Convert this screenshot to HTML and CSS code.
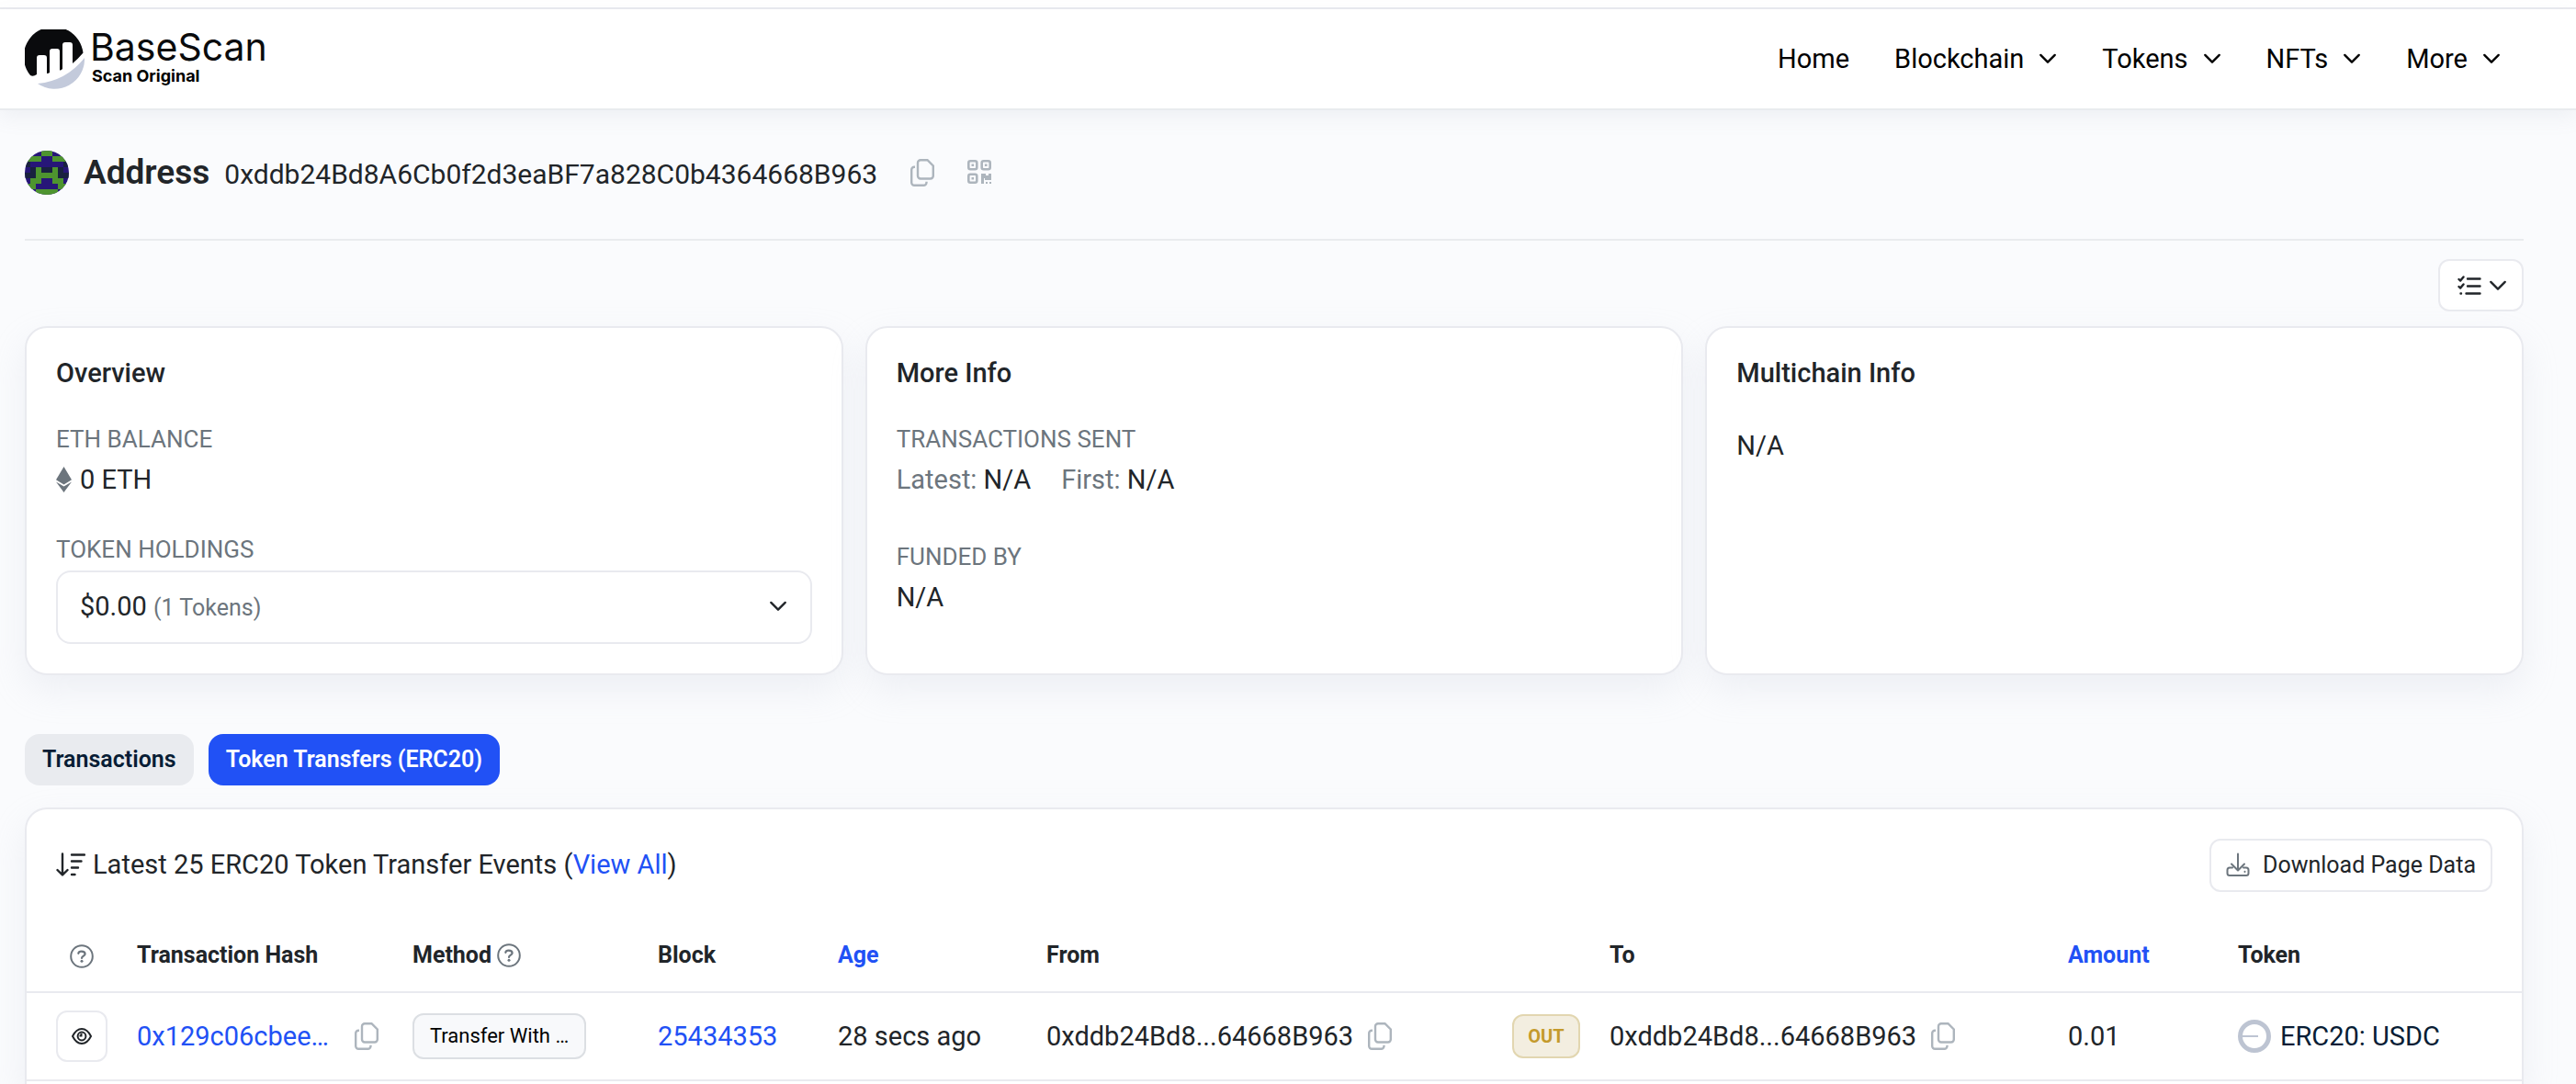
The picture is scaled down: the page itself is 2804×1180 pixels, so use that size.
FILE: index.html
```html
<!DOCTYPE html>
<html lang="en">

<head>
    <meta charset="UTF-8">
    <meta name="viewport" content="width=device-width, initial-scale=1.0">
    <title>Address | BaseScan</title>
    <link rel="stylesheet" href="styles.css">
</head>

<body>
    <!-- shared icons -->
    <svg class="sprite" aria-hidden="true">
        <symbol id="chevron" viewBox="0 0 22 14">
            <path d="M2.500 2.500L11 11L19.500 2.500" fill="none" stroke="currentColor" stroke-width="2.600" stroke-linecap="round" stroke-linejoin="round" />
        </symbol>
        <symbol id="copy" viewBox="0 0 26 30">
            <path d="M11 1.200H18.500L24.800 7.500V18.500A3 3 0 0 1 21.800 21.500H11A3 3 0 0 1 8 18.500V4.200A3 3 0 0 1 11 1.200ZM5 8.700H4.200A3 3 0 0 0 1.200 11.700V25.800A3 3 0 0 0 4.200 28.800H14.500A3 3 0 0 0 17.500 25.800V24.800" fill="none" stroke="currentColor" stroke-width="2.400" />
        </symbol>
        <symbol id="help" viewBox="0 0 26 26">
            <circle cx="13" cy="13" r="11.800" fill="none" stroke="currentColor" stroke-width="2" />
            <path d="M9.300 9.800C9.600 8.300 10.600 7.600 12.600 7.600C15 7.600 16.600 8.600 16.600 10.400C16.600 12.600 13 12.600 13 15" fill="none" stroke="currentColor" stroke-width="2.200" stroke-linecap="round" />
            <circle cx="13" cy="18.300" r="1.500" fill="currentColor" />
        </symbol>
    </svg>

    <div class="topbar"></div>
    <header class="header">
        <a class="logo" href="#">
            <svg width="65" height="65" viewBox="0 0 65 65" aria-hidden="true">
                <path fill="#0a0b0d" d="M6 50A32.500 32.500 0 1 1 63.500 25.500Q58 32 52 37V17Q52 14 49 14H44Q41 14 41 17V43Q39.500 44.500 38 44.500V24Q38 21 35 21H30Q27 21 27 24V47Q26 48 24 48V31Q24 28 21 28H16Q13 28 13 31V49Q9 52 6 50Z" />
                <path fill="#c3cadb" d="M65 31A32.500 32.500 0 0 1 14 59Q45 56 65 31Z" />
            </svg>
            <span class="logo-text">
                <span class="logo-name">BaseScan</span>
                <span class="logo-sub">Scan Original</span>
            </span>
        </a>
        <nav class="nav">
            <a href="#">Home</a>
            <a href="#">Blockchain <svg class="chevron"><use href="#chevron" /></svg></a>
            <a href="#">Tokens <svg class="chevron"><use href="#chevron" /></svg></a>
            <a href="#">NFTs <svg class="chevron"><use href="#chevron" /></svg></a>
            <a href="#">More <svg class="chevron"><use href="#chevron" /></svg></a>
        </nav>
    </header>

    <main class="container">
        <div class="address">
            <svg class="identicon" viewBox="0 0 8 8" shape-rendering="crispEdges" aria-hidden="true">
                <rect width="8" height="8" fill="#271678" />
                <path fill="#4e942f" d="M3 0h2v1h-2zM0 1h3v1h-3zM5 1h3v1h-3zM2 3h1v1h2v-1h1v2h1v1h1v1h-2v-1h-1v-1h-2v1h-1v1h-2v-1h1v-1h1zM0 6h2v1h-2zM6 6h2v1h-2zM2 7h4v1h-4z" />
                <path fill="#19213f" d="M0 2h1v1h-1zM7 2h1v1h-1zM1 3h1v2h-2v-1h1zM6 3h1v1h1v1h-2zM3 3h2v1h-2z" />
            </svg>
            <div class="address-title">
                <h1>Address</h1>
                <span class="hash">0xddb24Bd8A6Cb0f2d3eaBF7a828C0b4364668B963</span>
            </div>
            <button class="icon-btn" aria-label="Copy address"><svg class="copy"><use href="#copy" /></svg></button>
            <button class="icon-btn qr" aria-label="Show QR code">
                <svg width="26" height="26" viewBox="0 0 26 26">
                    <g fill="none" stroke="currentColor" stroke-width="2.600">
                        <rect x="1.300" y="1.300" width="9" height="9" rx="2" />
                        <rect x="15.700" y="1.300" width="9" height="9" rx="2" />
                        <rect x="1.300" y="15.700" width="9" height="9" rx="2" />
                    </g>
                    <path fill="currentColor" d="M4.500 4.500h2.600v2.600h-2.600zM18.900 4.500h2.600v2.600h-2.600zM4.500 18.900h2.600v2.600h-2.600zM15 15h5v2h3v-2h3v7h-7v-2h-1v6h-3zM20 24h2v2h-2zM24 24h2v2h-2z" />
                </svg>
            </button>
        </div>

        <div class="toolbar">
            <button class="btn options-btn" aria-label="Options">
                <svg width="26" height="22" viewBox="0 0 26 22" fill="none" stroke="currentColor" stroke-width="2.400" stroke-linecap="round" stroke-linejoin="round">
                    <path d="M1.500 4L3.200 5.600L6.500 1.500M1.500 12L3.200 13.600L6.500 9.500M11 3.500H24.500M11 11.500H24.500M9.500 19.500H24.500M3.500 19.500H4" />
                </svg>
                <svg class="chevron"><use href="#chevron" /></svg>
            </button>
        </div>

        <div class="cards">
            <section class="card">
                <h2>Overview</h2>
                <div class="info">
                    <h4>ETH BALANCE</h4>
                    <p class="value">
                        <svg width="17" height="28" viewBox="0 0 17 28" fill="#6c757d" aria-hidden="true">
                            <path d="M8.500 0L17 14.300L8.500 19.400L0 14.300ZM0 16.500L8.500 21.500L17 16.500L8.500 28Z" />
                        </svg>
                        0 ETH
                    </p>
                </div>
                <div class="info">
                    <h4>TOKEN HOLDINGS</h4>
                    <button class="btn holdings">
                        <span>$0.00 <small>(1 Tokens)</small></span>
                        <svg class="chevron"><use href="#chevron" /></svg>
                    </button>
                </div>
            </section>

            <section class="card more-info">
                <h2>More Info</h2>
                <div class="info">
                    <h4>TRANSACTIONS SENT</h4>
                    <p class="value sent">
                        <span><span class="muted">Latest:</span> N/A</span>
                        <span><span class="muted">First:</span> N/A</span>
                    </p>
                </div>
                <div class="info">
                    <h4>FUNDED BY</h4>
                    <p class="value">N/A</p>
                </div>
            </section>

            <section class="card multichain">
                <h2>Multichain Info</h2>
                <p class="value">N/A</p>
            </section>
        </div>

        <div class="tabs">
            <button class="tab">Transactions</button>
            <button class="tab active">Token Transfers (ERC20)</button>
        </div>

        <section class="transfers">
            <div class="transfers-head">
                <p class="transfers-title">
                    <svg width="32" height="26" viewBox="0 0 32 26" fill="none" stroke="currentColor" stroke-width="2.400" stroke-linecap="round" stroke-linejoin="round" aria-hidden="true">
                        <path d="M7 1.500V24M1.500 19L7 24.500L12.500 19M17 2.500H31M17 9.500H27.500M17 16.500H24M17 24H20.500" />
                    </svg>
                    <span>Latest 25 ERC20 Token Transfer Events (<a href="#">View All</a>)</span>
                </p>
                <button class="btn download">
                    <svg width="26" height="26" viewBox="0 0 26 26" fill="none" stroke="#6c757d" stroke-width="2" stroke-linecap="round" stroke-linejoin="round" aria-hidden="true">
                        <path d="M13 1.500V19M6 12.500L13 19.500L20 12.500M7 16.500H4A2.500 2.500 0 0 0 1.500 19V22.500A2.500 2.500 0 0 0 4 25H22A2.500 2.500 0 0 0 24.500 22.500V19A2.500 2.500 0 0 0 22 16.500H19M20.500 20.800V21" />
                    </svg>
                    Download Page Data
                </button>
            </div>

            <table class="table">
                <colgroup>
                    <col class="col-view">
                    <col class="col-hash">
                    <col class="col-method">
                    <col class="col-block">
                    <col class="col-age">
                    <col class="col-from">
                    <col class="col-dir">
                    <col class="col-to">
                    <col class="col-amount">
                    <col class="col-token">
                </colgroup>
                <thead>
                    <tr>
                        <th class="center"><svg class="help"><use href="#help" /></svg></th>
                        <th>Transaction Hash</th>
                        <th><span class="cell">Method <svg class="help"><use href="#help" /></svg></span></th>
                        <th>Block</th>
                        <th><a href="#">Age</a></th>
                        <th>From</th>
                        <th></th>
                        <th>To</th>
                        <th><a href="#">Amount</a></th>
                        <th>Token</th>
                    </tr>
                </thead>
                <tbody>
                    <tr>
                        <td>
                            <button class="btn view-btn" aria-label="View details">
                                <svg width="22" height="18" viewBox="0 0 22 18" fill="none" stroke="currentColor" stroke-width="2">
                                    <path d="M1 9C3.500 4 7 1 11 1S18.500 4 21 9C18.500 14 15 17 11 17S3.500 14 1 9Z" />
                                    <circle cx="11" cy="9" r="4.400" />
                                    <path d="M10.500 6V8.500H8.500" />
                                </svg>
                            </button>
                        </td>
                        <td>
                            <span class="cell tx">
                                <a href="#">0x129c06cbee…</a>
                                <button class="icon-btn" aria-label="Copy hash"><svg class="copy"><use href="#copy" /></svg></button>
                            </span>
                        </td>
                        <td><span class="method">Transfer With …</span></td>
                        <td><a href="#">25434353</a></td>
                        <td>28 secs ago</td>
                        <td>
                            <span class="cell">0xddb24Bd8...64668B963
                                <button class="icon-btn" aria-label="Copy sender"><svg class="copy"><use href="#copy" /></svg></button>
                            </span>
                        </td>
                        <td class="center"><span class="out">OUT</span></td>
                        <td>
                            <span class="cell">0xddb24Bd8...64668B963
                                <button class="icon-btn" aria-label="Copy receiver"><svg class="copy"><use href="#copy" /></svg></button>
                            </span>
                        </td>
                        <td>0.01</td>
                        <td>
                            <a class="cell token" href="#">
                                <svg width="36" height="36" viewBox="0 0 36 36" fill="none" stroke="#bdc4d2" aria-hidden="true">
                                    <circle cx="18" cy="18" r="15.500" stroke-width="5" />
                                    <path d="M5 18H22" stroke-width="2" />
                                </svg>
                                ERC20: USDC
                            </a>
                        </td>
                    </tr>
                </tbody>
            </table>
        </section>
    </main>
</body>

</html>
```
FILE: styles.css
```css
* {
    box-sizing: border-box;
}

body {
    margin: 0;
    min-height: 100vh;
    display: flex;
    flex-direction: column;
    font-family: Roboto, "Liberation Sans", sans-serif;
    font-size: 29px;
    line-height: 42px;
    color: #212529;
    background-color: #fafbfd;
}

h1,
h2,
h4,
p {
    margin: 0;
}

a {
    color: #2151f5;
    text-decoration: none;
}

button {
    font-family: inherit;
    color: inherit;
    cursor: pointer;
}

.sprite {
    display: none;
}

.chevron {
    width: 20px;
    height: 14px;
}

.copy {
    display: block;
    width: 26px;
    height: 30px;
}

.help {
    display: inline-block;
    vertical-align: middle;
    width: 26px;
    height: 26px;
    color: #6c757d;
}

.icon-btn {
    padding: 0;
    border: none;
    background: none;
    color: #adb5bd;
}

.btn {
    display: flex;
    align-items: center;
    background-color: white;
    border: 2px solid #e9eaef;
    border-radius: 12px;
}

/* header */
.topbar {
    height: 10px;
    background-color: white;
    border-bottom: 2px solid #e9eaef;
}

.header {
    display: flex;
    align-items: center;
    justify-content: space-between;
    height: 110px;
    padding: 0 82px 0 27px;
    background-color: white;
    border-bottom: 2px solid #e9ebee;
    box-shadow: 0 8px 20px rgba(140, 152, 164, 0.1);
}

.logo {
    display: flex;
    gap: 6px;
    color: #0a0b0d;
    font-family: Inter, sans-serif;
}

.logo-text {
    display: flex;
    flex-direction: column;
}

.logo-name {
    font-size: 41px;
    line-height: 38px;
}

.logo-sub {
    padding-left: 2px;
    font-size: 18px;
    font-weight: 700;
    line-height: 26px;
    color: black;
}

.nav {
    display: flex;
    gap: 49px;
}

.nav a {
    display: flex;
    align-items: center;
    gap: 16px;
    line-height: 40px;
    color: black;
}

/* address */
.container {
    flex: 1;
    display: flex;
    flex-direction: column;
    padding: 0 57px 0 27px;
}

.address {
    display: flex;
    align-items: center;
    padding: 44px 0 48px;
    border-bottom: 2px solid #e9ebee;
}

.identicon {
    width: 48px;
    height: 48px;
    margin-right: 16px;
    border-radius: 50%;
}

.address-title {
    display: flex;
    align-items: baseline;
    gap: 16px;
    margin-right: 36px;
}

.address h1 {
    font-size: 37px;
    font-weight: 600;
    line-height: 44px;
}

.hash {
    font-size: 30px;
}

.qr {
    margin-left: 36px;
}

.toolbar {
    display: flex;
    justify-content: flex-end;
    padding: 20px 0 16px;
}

.options-btn {
    gap: 8px;
    height: 57px;
    padding: 0 16px 0 19px;
}

/* info cards */
.cards {
    display: grid;
    grid-template-columns: repeat(3, 1fr);
    gap: 24px;
}

.card {
    padding: 32px;
    background-color: white;
    border: 2px solid #e9eaef;
    border-radius: 24px;
    box-shadow: 0 16px 38px rgba(189, 197, 209, 0.2);
}

.card h2 {
    font-size: 29px;
    font-weight: 500;
    line-height: 34px;
}

.card h4 {
    margin-bottom: 2px;
    font-size: 26px;
    font-weight: 400;
    line-height: 42px;
    color: #6c757d;
}

.info {
    margin-top: 34px;
}

.more-info .info + .info {
    margin-top: 42px;
}

.value {
    display: flex;
    align-items: center;
    gap: 9px;
}

.sent {
    gap: 33px;
}

.multichain .value {
    margin-top: 41px;
}

.muted {
    color: #6c757d;
}

.holdings {
    justify-content: space-between;
    width: 100%;
    height: 80px;
    padding: 0 25px 2px 24px;
    font-size: 29px;
    border-radius: 16px;
}

.holdings small {
    font-size: 25px;
    color: #6c757d;
}

/* tabs */
.tabs {
    display: flex;
    gap: 16px;
    margin: 64px 0 24px;
}

.tab {
    height: 56px;
    padding: 0 19px 2px;
    font-size: 25px;
    font-weight: 600;
    color: #081d35;
    background-color: #e9ebef;
    border: none;
    border-radius: 16px;
}

.tab.active {
    color: white;
    background-color: #2151f5;
}

/* token transfers */
.transfers {
    flex: 1;
    background-color: white;
    border: 2px solid #e9eaef;
    border-bottom: none;
    border-radius: 24px 24px 0 0;
    box-shadow: 0 16px 38px rgba(189, 197, 209, 0.2);
}

.transfers-head {
    display: flex;
    align-items: center;
    justify-content: space-between;
    padding: 32px 32px 30px;
}

.transfers-title {
    display: flex;
    align-items: center;
    gap: 8px;
    padding-bottom: 2px;
}

.download {
    gap: 14px;
    height: 58px;
    padding: 0 16px 2px;
    font-size: 25px;
}

.table {
    width: 100%;
    table-layout: fixed;
    border-spacing: 0;
    white-space: nowrap;
}

.col-view { width: 104px; }
.col-hash { width: 300px; }
.col-method { width: 267px; }
.col-block { width: 196px; }
.col-age { width: 227px; }
.col-from { width: 507px; }
.col-dir { width: 106px; }
.col-to { width: 499px; }
.col-amount { width: 185px; }

th,
td {
    padding: 0 16px;
    text-align: left;
    border-bottom: 2px solid #e9eaef;
}

th {
    height: 80px;
    font-size: 25px;
    font-weight: 700;
}

td {
    height: 96px;
}

th:first-child,
td:first-child {
    padding: 0 16px 0 32px;
}

th.center,
td.center {
    text-align: center;
}

.cell {
    display: flex;
    align-items: center;
    gap: 16px;
}

th .cell {
    gap: 6px;
}

.tx {
    gap: 28px;
}

.view-btn {
    justify-content: center;
    width: 56px;
    height: 56px;
    padding: 0;
}

.method {
    display: inline-block;
    padding: 0 17px;
    font-size: 22px;
    line-height: 46px;
    color: black;
    background-color: #f8f9fb;
    border: 2px solid #dcdfe3;
    border-radius: 12px;
}

.out {
    display: inline-block;
    padding: 0 15px;
    font-size: 20px;
    font-weight: 700;
    line-height: 44px;
    color: #c49a2c;
    background-color: #f3eee0;
    border: 2px solid #e2d6b0;
    border-radius: 12px;
}

.token {
    gap: 10px;
    color: #081d35;
}
```
